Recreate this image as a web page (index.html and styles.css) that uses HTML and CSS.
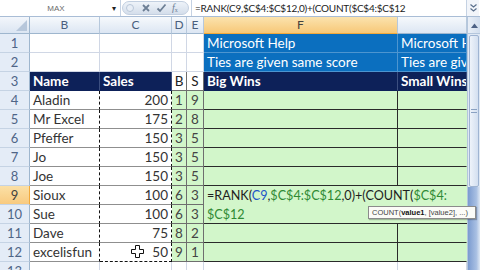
FILE: index.html
```html
<!DOCTYPE html>
<html lang="en">
<head>
  <meta charset="UTF-8" />
  <title>RANK ties - Excel</title>
  <link rel="stylesheet" href="styles.css">
</head>
<body>
  <div class="app">
    <div class="formula-bar">
      <div class="name-box"><span class="nb-label">MAX</span><span class="caret">▾</span></div>
      <div class="fx-buttons">
        <span class="knob"></span>
        <svg class="fx-icon" width="10" height="10" viewBox="0 0 10 10"><path d="M2 2 L8 8 M8 2 L2 8" stroke="#6d7f95" stroke-width="1.8" fill="none"/></svg>
        <svg class="fx-icon" width="11" height="10" viewBox="0 0 11 10"><path d="M1.5 5.5 L4 8 L9.5 1.5" stroke="#6d7f95" stroke-width="1.8" fill="none"/></svg>
        <span class="fx"><i>f</i><sub>x</sub></span>
      </div>
      <div class="formula-text">=RANK(C9,$C$4:$C$12,0)+(COUNT($C$4:$C$12</div>
      <div class="expand">
        <svg width="9" height="10" viewBox="0 0 9 10"><path d="M1.5 1.5 L4.5 4 L7.5 1.5 M1.5 5.5 L4.5 8 L7.5 5.5" stroke="#5a6f8c" stroke-width="1.2" fill="none"/></svg>
      </div>
    </div>

    <div class="main">
      <div class="sheet">
        <!-- column headers -->
        <div class="corner"><span class="tri"></span></div>
        <div class="colh">B</div>
        <div class="colh">C</div>
        <div class="colh">D</div>
        <div class="colh">E</div>
        <div class="colh sel">F</div>
        <div class="colh"></div>

        <!-- row 1 -->
        <div class="rowh">1</div>
        <div class="c"></div><div class="c"></div><div class="c"></div><div class="c"></div>
        <div class="c blue">Microsoft Help</div>
        <div class="c blue clip">Microsoft Help</div>

        <!-- row 2 -->
        <div class="rowh">2</div>
        <div class="c"></div><div class="c"></div><div class="c"></div><div class="c"></div>
        <div class="c blue">Ties are given same score</div>
        <div class="c blue clip">Ties are given same score</div>

        <!-- row 3 -->
        <div class="rowh">3</div>
        <div class="c navy">Name</div>
        <div class="c navy">Sales</div>
        <div class="c hd">B</div>
        <div class="c hd">S</div>
        <div class="c navy">Big Wins</div>
        <div class="c navy clip">Small Wins</div>

        <div class="rowh">4</div>
        <div class="c txt ant">Aladin</div><div class="c num ant">200</div>
        <div class="c grn ctr">1</div><div class="c grn ctr">9</div>
        <div class="c gr"></div><div class="c gr last"></div>

        <div class="rowh">5</div>
        <div class="c txt ant">Mr Excel</div><div class="c num ant">175</div>
        <div class="c grn ctr">2</div><div class="c grn ctr">8</div>
        <div class="c gr"></div><div class="c gr last"></div>

        <div class="rowh">6</div>
        <div class="c txt ant">Pfeffer</div><div class="c num ant">150</div>
        <div class="c grn ctr">3</div><div class="c grn ctr">5</div>
        <div class="c gr"></div><div class="c gr last"></div>

        <div class="rowh">7</div>
        <div class="c txt ant">Jo</div><div class="c num ant">150</div>
        <div class="c grn ctr">3</div><div class="c grn ctr">5</div>
        <div class="c gr"></div><div class="c gr last"></div>

        <div class="rowh">8</div>
        <div class="c txt ant">Joe</div><div class="c num ant">150</div>
        <div class="c grn ctr">3</div><div class="c grn ctr">5</div>
        <div class="c gr"></div><div class="c gr last"></div>

        <div class="rowh sel">9</div>
        <div class="c txt ant">Sioux</div><div class="c num ant">100</div>
        <div class="c grn ctr">6</div><div class="c grn ctr">3</div>
        <div class="c gr edit">=RANK(<span class="ref1">C9</span>,<span class="ref2">$C$4:$C$12</span>,0)+(COUNT(<span class="ref2">$C$4:</span><br><span class="ref2">$C$12</span></div>

        <div class="rowh">10</div>
        <div class="c txt ant">Sue</div><div class="c num ant">100</div>
        <div class="c grn ctr">6</div><div class="c grn ctr">3</div>

        <div class="rowh">11</div>
        <div class="c txt ant">Dave</div><div class="c num ant">75</div>
        <div class="c grn ctr">8</div><div class="c grn ctr">2</div>
        <div class="c gr"></div><div class="c gr last"></div>

        <div class="rowh">12</div>
        <div class="c txt ant">excelisfun</div><div class="c num ant bottom">50</div>
        <div class="c grn ctr">9</div><div class="c grn ctr">1</div>
        <div class="c gr"></div><div class="c gr last"></div>

        <div class="rowh">13</div>
        <div class="c"></div><div class="c"></div><div class="c"></div><div class="c"></div>
        <div class="c"></div><div class="c"></div>
      </div>

      <div class="vscroll">
        <div class="arrow">
          <svg width="7" height="5" viewBox="0 0 7 5"><path d="M0 5 L3.5 0.5 L7 5 Z" fill="#4d6185"/></svg>
        </div>
        <div class="thumb"><span class="grip"></span></div>
        <div class="track"></div>
      </div>

      <div class="tooltip">COUNT(<b>value1</b>, [value2], ...)</div>
      <svg class="cursor" width="13" height="13" viewBox="0 0 13 13"><path d="M4.5 0.5 H8.5 V4.5 H12.5 V8.5 H8.5 V12.5 H4.5 V8.5 H0.5 V4.5 H4.5 Z" fill="#fff" stroke="#111" stroke-width="1"/></svg>
    </div>
  </div>
</body>
</html>
```

FILE: styles.css
```css
* {
  margin: 0;
  padding: 0;
  box-sizing: border-box;
}

body {
  width: 480px;
  height: 270px;
  overflow: hidden;
  background: #ffffff;
  font-family: 'Lato', 'Open Sans', sans-serif;
}

.app {
  width: 480px;
  height: 270px;
  display: flex;
  flex-direction: column;
}

/* Formula bar */
.formula-bar {
  height: 17px;
  display: flex;
  align-items: center;
  border-bottom: 1px solid #a9bdd6;
  background: #ffffff;
}

.name-box {
  width: 121px;
  height: 16px;
  display: flex;
  align-items: center;
  padding: 0 4px 0 0;
  border-right: 1px solid #c5d2e3;
}

.nb-label {
  flex: 1;
  text-align: center;
  font-family: 'Liberation Sans', sans-serif;
  font-size: 8px;
  color: #6b6b6b;
}

.caret {
  font-size: 8px;
  color: #222;
}

.fx-buttons {
  width: 67px;
  height: 14px;
  margin-left: 1px;
  border-radius: 7px;
  background: linear-gradient(#eef3f9, #d4deeb);
  border: 1px solid #c2cfe0;
  display: flex;
  align-items: center;
  gap: 5px;
  padding-left: 3px;
}

.knob {
  width: 8px;
  height: 8px;
  border-radius: 50%;
  background: #e8eef6;
  border: 1px solid #b9c7d9;
  margin-right: 2px;
}

.fx {
  font-family: 'Liberation Serif', serif;
  font-size: 10px;
  color: #6d7f95;
  line-height: 1;
}

.fx sub {
  font-size: 6px;
  vertical-align: -1px;
}

.formula-text {
  flex: 1;
  height: 16px;
  border-left: 1px solid #c5d2e3;
  margin-left: 2px;
  padding-left: 3px;
  font-size: 10px;
  letter-spacing: -0.25px;
  line-height: 16px;
  color: #222;
  white-space: nowrap;
  overflow: hidden;
}

.expand {
  width: 13px;
  height: 16px;
  display: flex;
  align-items: center;
  justify-content: center;
  border-left: 1px solid #c5d2e3;
  background: #f2f5fa;
  margin-right: 1px;
}

/* Sheet */
.main {
  flex: 1;
  display: flex;
  position: relative;
  overflow: hidden;
}

.sheet {
  display: grid;
  grid-template-columns: 30px 70px 72px 15px 17px 194px 69px;
  grid-template-rows: 17px repeat(13, 19px);
  width: 467px;
  align-content: start;
}

.corner {
  background: linear-gradient(#f3f6fb, #dbe5f2);
  border-right: 1px solid #9eb6ce;
  border-bottom: 1px solid #9eb6ce;
  position: relative;
}

.tri {
  position: absolute;
  right: 2px;
  bottom: 2px;
  width: 0;
  height: 0;
  border-left: 11px solid transparent;
  border-bottom: 11px solid #b7c7db;
}

.colh {
  background: linear-gradient(#f6f9fc, #dce6f3);
  border-right: 1px solid #b6c8dc;
  border-bottom: 1px solid #9eb6ce;
  font-size: 12px;
  color: #4a5f7e;
  text-align: center;
  line-height: 16px;
}

.colh.sel {
  background: linear-gradient(#fbe3ae, #f7c878);
  border-bottom-color: #f2a93b;
  color: #43423e;
}

.rowh {
  background: #e4ecf7;
  border-right: 1px solid #9eb6ce;
  border-bottom: 1px solid #c5d3e4;
  font-size: 13px;
  color: #4f6587;
  text-align: center;
  line-height: 18px;
}

.rowh.sel {
  background: linear-gradient(#fbe0a6, #f8ca7f);
  border-right-color: #f2a93b;
  color: #43423e;
}

.c {
  border-right: 1px solid #d0d7e5;
  border-bottom: 1px solid #d0d7e5;
  font-size: 13.5px;
  line-height: 18px;
  color: #222;
  padding: 0 3px;
  white-space: nowrap;
  overflow: hidden;
}

.c.txt {
  color: #333;
  border-bottom-color: #8f8f8f;
}

.c.num {
  text-align: right;
  color: #333;
  border-bottom-color: #8f8f8f;
}

.c.ant {
  border-right: 1px dashed #111;
}

.c.bottom {
  border-bottom: 1px dashed #111;
}

.c.blue {
  background: #0b6fbf;
  color: #ffffff;
  border-right-color: #4d95d0;
  border-bottom-color: #4d95d0;
  overflow: visible;
}

.c.clip {
  overflow: hidden;
}

.c.navy {
  background: #0d2159;
  color: #ffffff;
  font-weight: bold;
  border-right-color: #3c4f80;
  border-bottom-color: #0d2159;
}

.c.hd {
  text-align: center;
  padding: 0;
  color: #222;
  border-right-color: #6e6e6e;
  border-bottom-color: #6e6e6e;
}

.c.grn {
  background: #d2f6ca;
  color: #444;
  border-right-color: #6e6e6e;
  border-bottom-color: #6e6e6e;
}

.c.ctr {
  text-align: center;
  padding: 0;
}

.c.gr {
  background: #d2f6ca;
  border-right-color: #2a2a2a;
  border-bottom-color: #2a2a2a;
}

.c.gr.last {
  border-right-color: #d2f6ca;
}

.c.edit {
  grid-column: 6 / span 2;
  grid-row: 10 / span 2;
  border-right: none;
  font-size: 12.6px;
  line-height: 19px;
  color: #1e1e1e;
  white-space: nowrap;
}

.ref1 {
  color: #2155c8;
}

.ref2 {
  color: #2f8a34;
}

/* Scrollbar */
.vscroll {
  width: 13px;
  display: flex;
  flex-direction: column;
  background: #dfe8f4;
  border-left: 1px solid #b4c6dc;
}

.arrow {
  height: 17px;
  display: flex;
  align-items: center;
  justify-content: center;
  background: linear-gradient(90deg, #e9eff7, #d2deee);
  border-bottom: 1px solid #b4c6dc;
}

.thumb {
  height: 152px;
  margin: 1px 1px 0;
  border: 1px solid #9fb4d2;
  border-radius: 2px;
  background: linear-gradient(90deg, #eef3fa, #d3dff0);
  display: flex;
  align-items: center;
  justify-content: center;
}

.grip {
  width: 6px;
  height: 4px;
  border-top: 1px solid #8aa1c2;
  border-bottom: 1px solid #8aa1c2;
}

.track {
  flex: 1;
  background: linear-gradient(90deg, #7b9bd0, #a9c0e3 70%, #dfe8f4);
}

.tooltip {
  position: absolute;
  left: 368px;
  top: 189px;
  width: 108px;
  height: 13px;
  padding: 0 3px;
  background: #fbfbf7;
  border: 1px solid #8b8b8b;
  box-shadow: 1px 1px 1px rgba(0, 0, 0, 0.25);
  font-family: 'Liberation Sans', sans-serif;
  font-size: 7.5px;
  line-height: 11px;
  color: #444;
  white-space: nowrap;
  overflow: hidden;
}

.tooltip b {
  color: #111;
}

.cursor {
  position: absolute;
  left: 131px;
  top: 228px;
}
```
